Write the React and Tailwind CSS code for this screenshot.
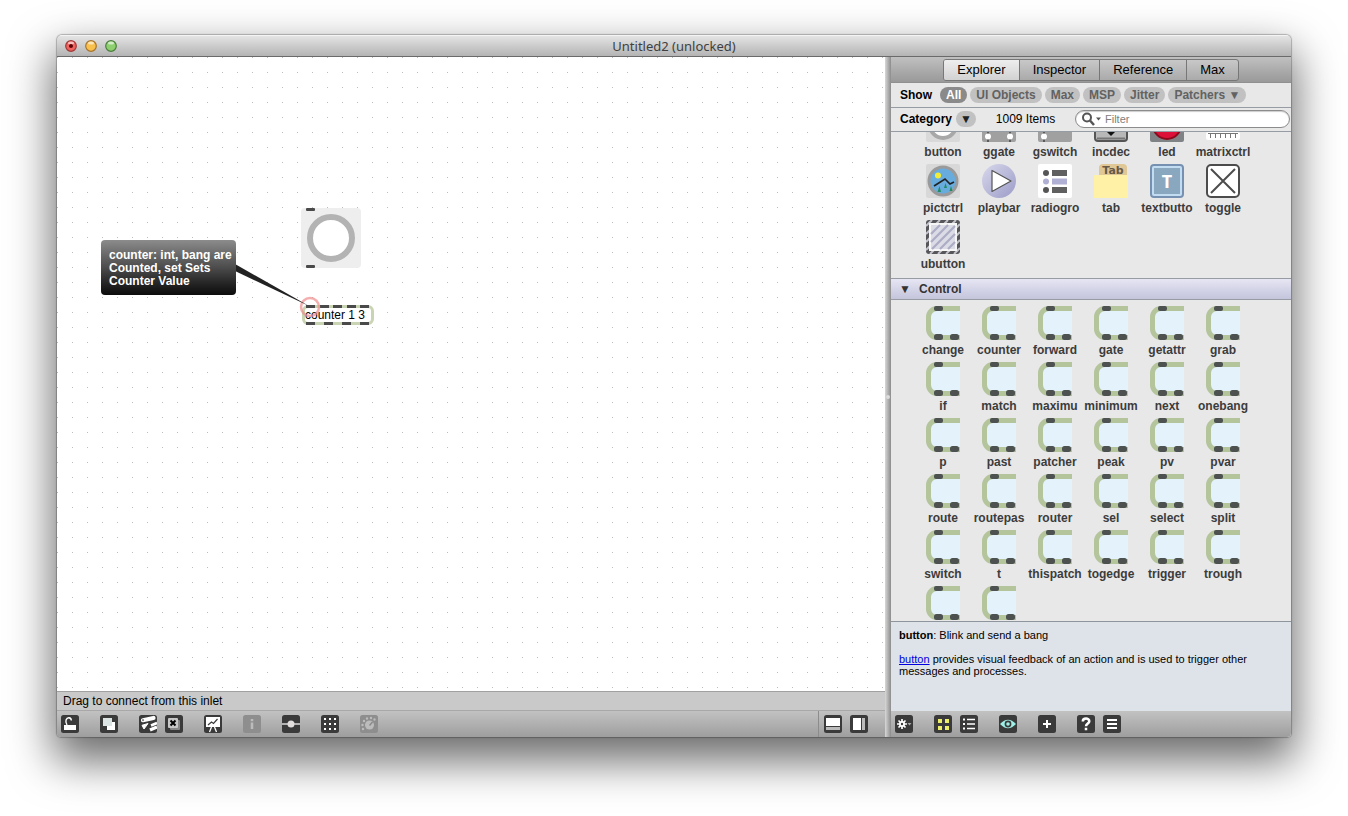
import React, { useState } from 'react';

const TABS = ['Explorer', 'Inspector', 'Reference', 'Max'];
const FILTERS = ['All', 'UI Objects', 'Max', 'MSP', 'Jitter', 'Patchers ▼'];

const INTERFACE = [
  'button', 'ggate', 'gswitch', 'incdec', 'led', 'matrixctrl',
  'pictctrl', 'playbar', 'radiogro', 'tab', 'textbutto', 'toggle',
  'ubutton',
];

const CONTROL = [
  'change', 'counter', 'forward', 'gate', 'getattr', 'grab',
  'if', 'match', 'maximu', 'minimum', 'next', 'onebang',
  'p', 'past', 'patcher', 'peak', 'pv', 'pvar',
  'route', 'routepas', 'router', 'sel', 'select', 'split',
  'switch', 't', 'thispatch', 'togedge', 'trigger', 'trough',
];

/* ---------- palette icons (34x34) ---------- */

const icons = {
  button: (
    <>
      <rect width="34" height="34" rx="2" fill="#d9d9d9" />
      <circle cx="17" cy="17" r="13" fill="#fff" stroke="#a8a8a8" strokeWidth="4" />
    </>
  ),
  ggate: (
    <>
      <rect width="34" height="34" rx="2" fill="#a0a0a0" />
      <path d="M6 24v10M28 24v10" stroke="#444" strokeWidth="1.5" />
      <circle cx="6" cy="28.5" r="3" fill="#fff" />
      <circle cx="28" cy="28.5" r="3" fill="#fff" />
    </>
  ),
  gswitch: (
    <>
      <rect width="34" height="34" rx="2" fill="#a0a0a0" />
      <path d="M6 20v14" stroke="#444" strokeWidth="1.5" />
      <circle cx="6" cy="28.5" r="3" fill="#fff" />
    </>
  ),
  incdec: (
    <>
      <rect x="1" y="1" width="32" height="32" rx="3" fill="#b8b8b8" stroke="#555" strokeWidth="2" />
      <path d="M3 30.5h28" stroke="#777" strokeWidth="2" />
      <path d="M13 24h8l-4 4z" fill="#111" />
    </>
  ),
  led: (
    <>
      <rect width="34" height="34" rx="2" fill="#808386" />
      <circle cx="17" cy="17" r="14" fill="#dc1038" stroke="#8c0a1c" strokeWidth="2" />
    </>
  ),
  matrixctrl: (
    <>
      <rect y="24" width="34" height="8" rx="2" fill="#fff" />
      <path d="M2 25.5h30M4.500 25v5M9.500 25v5M14.500 25v5M19.500 25v5M24.500 25v5M29.500 25v5" stroke="#777" />
    </>
  ),
  pictctrl: (
    <>
      <rect width="34" height="34" rx="2" fill="#d8d8d8" />
      <circle cx="17" cy="17" r="14" fill="#68acde" stroke="#9a9a9a" strokeWidth="3" />
      <circle cx="12" cy="11.5" r="3" fill="#f2ec36" />
      <path d="M8 22l11-7 5 5 4-2" fill="none" stroke="#222" strokeWidth="1.7" />
      <path d="M13.500 22l-2 6h3.500zM19.500 19l-1.500 5h3zM25 22l-1.500 5h3z" fill="#218c62" />
    </>
  ),
  playbar: (
    <>
      <circle cx="17" cy="17" r="17" fill="url(#playfill)" />
      <path d="M10 6.5v21l19-10.500z" fill="#fff" stroke="#555" strokeWidth="1.2" strokeLinejoin="round" />
    </>
  ),
  radiogro: (
    <>
      <rect width="34" height="34" rx="2" fill="#fff" />
      <circle cx="8" cy="9" r="3" fill="#555" />
      <circle cx="8" cy="17.5" r="3" fill="#b0b0d4" />
      <circle cx="8" cy="26" r="3" fill="#555" />
      <path d="M14 9h15M14 26h15" stroke="#606060" strokeWidth="6" />
      <path d="M14 17.5h15" stroke="#b0b0d4" strokeWidth="6" />
    </>
  ),
  tab: (
    <>
      <path d="M5 12V4a4 4 0 0 1 4-4h20a4 4 0 0 1 4 4v8z" fill="#dfc796" />
      <path d="M0 12a1 1 0 0 1 1-1h32a1 1 0 0 1 1 1v22H0z" fill="#fff2a6" />
      <text x="19" y="10" textAnchor="middle" fontSize="11" fontWeight="bold" fontFamily="DejaVu Sans, sans-serif" fill="#665947">Tab</text>
    </>
  ),
  textbutto: (
    <>
      <rect x="1" y="1" width="32" height="32" rx="3" fill="#8aa7c0" stroke="#7590b0" strokeWidth="2" />
      <rect x="3" y="3" width="28" height="28" rx="1" fill="none" stroke="#c2dcf2" strokeWidth="2" />
      <text x="17" y="24" textAnchor="middle" fontSize="18" fontWeight="bold" fontFamily="Noto Sans, sans-serif" fill="#fff">T</text>
    </>
  ),
  toggle: (
    <>
      <rect x="1" y="1" width="32" height="32" rx="4" fill="#fff" stroke="#4c4c4c" strokeWidth="2" />
      <path d="M5 5l24 24M29 5L5 29" stroke="#4c4c4c" strokeWidth="2" />
    </>
  ),
  ubutton: (
    <>
      <rect width="34" height="34" rx="3" fill="#55555a" />
      <path d="M0 6l6-6M0 14L14 0M0 22L22 0M0 30L30 0M4 34l30-30M12 34l22-22M20 34l14-14M28 34l6-6" stroke="#c4c4cc" strokeWidth="2" />
      <rect x="4" y="4" width="26" height="26" fill="#dcdce6" stroke="#f6f6f6" strokeWidth="2" />
      <path d="M5 14l9-9M5 22L22 5M6 29L29 6M14 29l15-15M22 29l7-7" stroke="#acacc6" strokeWidth="2.2" />
    </>
  ),
  object: (
    <>
      <path d="M34 2.5H11A8.500 8.500 0 0 0 2.500 11v12A8.500 8.500 0 0 0 11 31.500h23" fill="#e4f2fc" stroke="#b4c59c" strokeWidth="5" />
      <rect x="8" y="0" width="9" height="5" rx="2" fill="#4d5150" />
      <rect x="8" y="28" width="9" height="6" rx="2.5" fill="#4d5150" />
      <rect x="24" y="28" width="9" height="6" rx="2.5" fill="#4d5150" />
    </>
  ),
};

function PaletteIcon({ icon }) {
  return <svg viewBox="0 0 34 34" className="h-[34px] w-[34px] shrink-0">{icons[icon]}</svg>;
}

function PaletteItem({ name, icon }) {
  return (
    <button className="flex h-14 w-14 flex-col items-center">
      <PaletteIcon icon={icon} />
      <span className="mt-1 text-[12px] leading-3 font-bold whitespace-nowrap text-[#3c3c3c]">{name}</span>
    </button>
  );
}

/* ---------- toolbar ---------- */

function ToolButton({ label, disabled, children }) {
  return (
    <button aria-label={label} disabled={disabled} className="h-[18px] w-[18px] shrink-0">
      <svg viewBox="0 0 18 18" className="h-[18px] w-[18px]" fill="none">
        <rect width="18" height="18" rx="2.5" fill={disabled ? '#8e8e8e' : '#3a3a3a'} />
        {children}
      </svg>
    </button>
  );
}

function PatcherToolbar() {
  return (
    <div className="flex h-[26px] shrink-0 items-center bg-linear-to-b from-[#c2c2c2] to-[#9e9e9e] pr-[17px] pl-1">
      <div className="flex flex-1 items-center gap-[21px]">
        <ToolButton label="Lock">
          <path d="M3 10h12v5H3z" fill="#fff" />
          <path d="M6 10C3.500 6 5.500 2.500 8 2.700C9.500 2.900 10.300 4 10.300 5.500" stroke="#fff" strokeWidth="1.4" />
        </ToolButton>
        <ToolButton label="Presentation mode">
          <path d="M7 7h8v8H7z" fill="#fff" />
          <path d="M3 3h9v8H3z" fill="#dce4e4" />
        </ToolButton>
        <div className="flex gap-2">
          <ToolButton label="Patch cords">
            <path d="M4 5.2L14.500 3" stroke="#fff" strokeWidth="4.2" strokeLinecap="round" />
            <path d="M3 10.300l6-1.800-4 5.500z" fill="#fff" stroke="#fff" />
            <path d="M12 10.500l6-2.500" stroke="#fff" strokeWidth="2.6" />
            <path d="M11 15l7-3" stroke="#fff" strokeWidth="3.4" />
            <circle cx="4" cy="5.2" r="1.1" fill="#888" />
          </ToolButton>
          <ToolButton label="Close windows">
            <rect x="5" y="5" width="10" height="10" rx="1" fill="#888" />
            <rect x="3" y="3" width="10" height="10" rx="1" fill="#c8c8c8" />
            <path d="M5.5 5.500l5 5M10.500 5.500l-5 5" stroke="#000" strokeWidth="2" />
          </ToolButton>
        </div>
        <ToolButton label="Patcher inspector">
          <path d="M2 2h14v10H2z" fill="#fff" />
          <path d="M4 10l3.500-3 2 1.500L13.500 4" stroke="#3a3a3a" strokeWidth="1.2" />
          <path d="M7.500 12L5.500 17M10.500 12l2 5" stroke="#fff" strokeWidth="1.3" />
        </ToolButton>
        <ToolButton label="Info" disabled>
          <path d="M9 4v2.200M9 7.500V14" stroke="#bcbcbc" strokeWidth="2.5" />
        </ToolButton>
        <ToolButton label="Probe">
          <path d="M0 9h18" stroke="#ddd" strokeWidth="1.5" />
          <circle cx="9" cy="9" r="3.5" fill="#e2dede" />
        </ToolButton>
        <ToolButton label="Grid">
          <path d="M3 4h12M3 9h12M3 14h12" stroke="#fff" strokeWidth="2" strokeDasharray="2 3" />
        </ToolButton>
        <ToolButton label="Audio" disabled>
          <circle cx="9.5" cy="10" r="4.5" fill="#bcbcbc" />
          <path d="M9.5 10.500L12.500 7" stroke="#8a8a8a" strokeWidth="1.5" />
          <path d="M3 14h.01M2.500 10h.01M4 6h.01M7 3.500h.01M11 3h.01M14.500 4.500h.01" stroke="#bcbcbc" strokeWidth="2.4" strokeLinecap="round" />
        </ToolButton>
      </div>
      <div className="flex h-full items-center gap-2 border-l border-[#8c8c8c] pl-[5px]">
        <ToolButton label="Bottom panel">
          <path d="M2 3h14v8H2z" fill="#fff" />
          <path d="M2 12h14v3H2z" fill="#bbb" />
        </ToolButton>
        <ToolButton label="Side panel">
          <path d="M3 3h8v12H3z" fill="#fff" />
          <path d="M12 3h3v12h-3z" fill="#bbb" />
        </ToolButton>
      </div>
    </div>
  );
}

function SidebarToolbar() {
  return (
    <div className="flex h-[26px] shrink-0 items-center gap-[21px] bg-linear-to-b from-[#c2c2c2] to-[#9e9e9e] pl-1">
      <ToolButton label="Settings">
        <path d="M7 4v10M2 9h10M3.500 5.500l7 7M10.500 5.500l-7 7" stroke="#fff" strokeWidth="1.7" />
        <circle cx="7" cy="9" r="3" fill="#fff" />
        <circle cx="7" cy="9" r="1.2" fill="#3a3a3a" />
        <path d="M12.500 8h4l-2 2.500z" fill="#aaa" />
      </ToolButton>
      <div className="flex gap-2">
        <ToolButton label="Icon view">
          <path d="M4 4h4v4H4zM11 4h4v4h-4zM4 11h4v4H4zM11 11h4v4h-4z" fill="#eef06a" />
        </ToolButton>
        <ToolButton label="List view">
          <path d="M3 4.500h2M3 9h2M3 13.500h2" stroke="#fff" strokeWidth="2" />
          <path d="M7 4.500h8M7 9h8M7 13.500h8" stroke="#fff" strokeWidth="1.6" />
        </ToolButton>
      </div>
      <ToolButton label="Preview">
        <path d="M1 9q8-8.500 16 0q-8 8.500-16 0z" fill="#9ff0e6" />
        <circle cx="9" cy="9" r="3.4" fill="#3a3a3a" />
        <circle cx="9" cy="9" r="1.8" fill="#9ff0e6" />
      </ToolButton>
      <ToolButton label="Add">
        <path d="M9 5v8M5 9h8" stroke="#fff" strokeWidth="2" />
      </ToolButton>
      <div className="flex gap-2">
        <ToolButton label="Help">
          <path d="M5.800 6.500C5.800 2.500 12.300 2.700 12.300 6.300C12.300 8.500 9 8.600 9 11.300M9 12.800v2.500" stroke="#fff" strokeWidth="2.5" />
        </ToolButton>
        <ToolButton label="Menu">
          <path d="M4 5h10M4 9h10M4 13h10" stroke="#fff" strokeWidth="2" />
        </ToolButton>
      </div>
    </div>
  );
}

/* ---------- patcher canvas ---------- */

function Canvas() {
  return (
    <div className="relative min-h-0 flex-1 overflow-hidden bg-white bg-[radial-gradient(circle_at_0_0,#bdbdbd_1px,transparent_1px)] bg-size-[15px_15px]">
      {/* bang button */}
      <svg viewBox="0 0 60 60" className="absolute top-[151px] left-[244px] h-[60px] w-[60px]">
        <rect width="60" height="60" rx="4" fill="#eee" />
        <circle cx="30" cy="30" r="21" fill="#fff" stroke="#b3b3b3" strokeWidth="6" />
        <rect x="5" y="0" width="9" height="3" rx="1" fill="#4a4a4a" />
        <rect x="5" y="57" width="9" height="3" rx="1" fill="#4a4a4a" />
      </svg>

      {/* counter object */}
      <div className="absolute top-[248px] left-[245px] flex h-5 w-[72px] items-center rounded-md border-3 border-[#c9d4b3] bg-white text-[12px] whitespace-nowrap text-black">
        counter 1 3
      </div>
      <svg viewBox="0 0 72 20" className="absolute top-[248px] left-[245px] h-5 w-[72px]">
        <path d="M4 1.500h9M18 1.500h9M31 1.500h9M45 1.500h9M58 1.500h9" stroke="#4a4a4a" strokeWidth="3" />
        <path d="M4 18.500h9M22 18.500h9M40 18.500h9M58 18.500h9" stroke="#4a4a4a" strokeWidth="3" />
      </svg>

      {/* inlet assistance */}
      <svg viewBox="0 0 100 60" className="absolute top-[200px] left-[170px] h-[60px] w-[100px]">
        <circle cx="83" cy="50" r="9" fill="none" stroke="#f08c8c" strokeOpacity=".7" strokeWidth="2.5" />
        <path d="M8 7L82 49L8 14z" fill="#222" />
      </svg>
      <div className="absolute top-[183px] left-[44px] rounded-sm bg-linear-to-b from-[#8c8c8c] via-[#4c4c4c] to-[#0c0c0c] pt-[9px] pr-1 pb-[7px] pl-2 text-[12px] leading-[13px] font-bold whitespace-nowrap text-white">
        counter: int, bang are<br />Counted, set Sets<br />Counter Value
      </div>
    </div>
  );
}

/* ---------- sidebar ---------- */

function Sidebar() {
  const [tab, setTab] = useState('Explorer');
  const [filter, setFilter] = useState('All');

  return (
    <aside className="flex w-[400px] shrink-0 flex-col bg-[#e8e8e8]">
      <div className="flex h-[26px] shrink-0 items-center justify-center border-b border-[#909090] bg-linear-to-b from-[#c0c0c0] to-[#999]">
        <div className="flex h-[22px] overflow-hidden rounded-[3px] border border-[#777] bg-linear-to-b from-[#c8c8c8] to-[#aaa]">
          {TABS.map((t) => (
            <button key={t} onClick={() => setTab(t)}
              className={`border-r border-[#777] px-[13px] text-[13px] leading-5 text-black last:border-r-0 ${t === tab ? 'bg-linear-to-b from-[#eee] to-[#d2d2d2]' : ''}`}>
              {t}
            </button>
          ))}
        </div>
      </div>

      <div className="flex h-[25px] shrink-0 items-center border-b border-[#979ca4] pl-[9px] text-[12px] font-bold">
        <span className="w-10 text-black">Show</span>
        <div className="flex gap-[3px]">
          {FILTERS.map((f) => (
            <button key={f} onClick={() => setFilter(f)}
              className={`h-4 rounded-full px-1.5 leading-4 whitespace-nowrap ${f === filter ? 'bg-[#8a8a8a] text-white' : 'bg-[#c1c1c1] text-[#626262]'}`}>
              {f}
            </button>
          ))}
        </div>
      </div>

      <div className="flex h-6 shrink-0 items-center border-b border-[#979ca4] pr-px pb-0.5 pl-[9px]">
        <span className="w-14 text-[12px] leading-4 font-bold text-black">Category</span>
        <button aria-label="Choose category" className="h-4 w-5 rounded-full bg-[#c1c1c1] text-[12px] leading-4 text-[#222]">▼</button>
        <span className="w-[99px] text-center text-[12px] leading-4 text-black">1009 Items</span>
        <label className="flex h-[18px] flex-1 items-center rounded-full border border-[#8c8c8c] bg-white pl-1.5 shadow-[inset_0_1px_1px_#ccc]">
          <svg viewBox="0 0 20 14" className="h-3.5 w-5 shrink-0" fill="none">
            <circle cx="5" cy="5.5" r="4" stroke="#555" strokeWidth="2" />
            <path d="M8 8.500l4 4.500" stroke="#555" strokeWidth="2.5" />
            <path d="M14 5.500h5l-2.500 3z" fill="#555" />
          </svg>
          <input type="text" aria-label="Filter" placeholder="Filter" className="ml-[3px] min-w-0 flex-1 bg-transparent text-[11px] leading-4 text-black outline-none placeholder:text-[#808080]" />
        </label>
      </div>

      {/* object palette, already scrolled part of the way */}
      <div className="flex min-h-0 flex-1 flex-col overflow-hidden">
        <div className="-mt-6 grid shrink-0 grid-cols-[repeat(6,56px)] pb-0.5 pl-6">
          {INTERFACE.map((name) => <PaletteItem key={name} name={name} icon={name} />)}
        </div>
        <button className="flex h-[22px] w-full shrink-0 items-center border-y border-[#979ca4] bg-linear-to-b from-[#e6e6f4] to-[#c4c4dc] pl-2 text-[12px] font-bold text-[#333]">
          <span className="w-5 text-left">▼</span>
          Control
        </button>
        <div className="grid shrink-0 grid-cols-[repeat(6,56px)] justify-items-center pt-1.5 pl-6">
          {CONTROL.map((name) => <PaletteItem key={name} name={name} icon="object" />)}
          <PaletteIcon icon="object" />
          <PaletteIcon icon="object" />
        </div>
      </div>

      <div className="h-[90px] shrink-0 border-t border-[#8e959c] bg-[#dee3ea] px-2 pt-[7px] text-[11px] leading-3 text-black">
        <p><b>button</b>: Blink and send a bang</p>
        <p className="mt-3 max-w-[352px]">
          <a href="#button" className="text-[#0000e0] underline">button</a> provides visual feedback of an action and is used to trigger other messages and processes.
        </p>
      </div>

      <SidebarToolbar />
    </aside>
  );
}

function TrafficLight({ label, fill, ring, dot }) {
  return (
    <button aria-label={label} className="h-3 w-3">
      <svg viewBox="0 0 12 12" className="h-3 w-3">
        <circle cx="6" cy="6" r="5.3" fill={fill} stroke={ring} strokeWidth="1.2" />
        <ellipse cx="6" cy="3" rx="3" ry="1.6" fill="#fff" opacity=".6" />
        {dot && <circle cx="6" cy="6" r="2" fill="#5c0505" />}
      </svg>
    </button>
  );
}

export default function App() {
  return (
    <div className="flex h-screen overflow-hidden bg-white px-[57px] pt-[35px] pb-[79px] font-['Liberation_Sans',Arial,sans-serif]">
      {/* gradient used by the playbar icon */}
      <svg className="absolute h-0 w-0" aria-hidden="true">
        <defs>
          <linearGradient id="playfill" x1="0" y1="0" x2="1" y2="1">
            <stop offset="0" stopColor="#d8d8ec" />
            <stop offset="1" stopColor="#9c9cc8" />
          </linearGradient>
        </defs>
      </svg>

      <div className="flex min-w-0 flex-1 flex-col overflow-hidden rounded-t-[5px] rounded-b-[4px] bg-[#c8c8c8] shadow-[0_0_1px_1px_rgba(0,0,0,0.25),0_20px_44px_4px_rgba(0,0,0,0.58)]">
        <header className="grid h-[22px] shrink-0 grid-cols-[1fr_auto_1fr] items-center border-t border-b border-t-[#f4f4f4] border-b-[#6a6a6a] bg-linear-to-b from-[#e4e4e4] to-[#b4b4b4]">
          <div className="flex gap-2 pl-2">
            <TrafficLight label="Close" fill="#f0625e" ring="#a03a38" dot />
            <TrafficLight label="Minimize" fill="#f8c04c" ring="#a8742c" />
            <TrafficLight label="Zoom" fill="#8ed070" ring="#4c7e3c" />
          </div>
          <h1 className="font-['Noto_Sans',sans-serif] text-[13px] leading-5 text-[#404040]">Untitled2 (unlocked)</h1>
        </header>

        <div className="flex min-h-0 flex-1">
          <main className="flex min-w-0 flex-1 flex-col">
            <Canvas />
            <div className="h-5 shrink-0 border-y border-t-[#a0a0a0] border-b-[#a8a8a8] bg-[#c9c9c9] pl-1.5 text-[12px] leading-[18px] text-black">
              Drag to connect from this inlet
            </div>
            <PatcherToolbar />
          </main>
          <div className="flex w-1.5 shrink-0 cursor-col-resize items-center justify-center bg-linear-to-r from-[#d8d8d8] to-[#8c8c8c]">
            <span className="h-1 w-1 rounded-full bg-[#dcdcdc]" />
          </div>
          <Sidebar />
        </div>
      </div>
    </div>
  );
}
